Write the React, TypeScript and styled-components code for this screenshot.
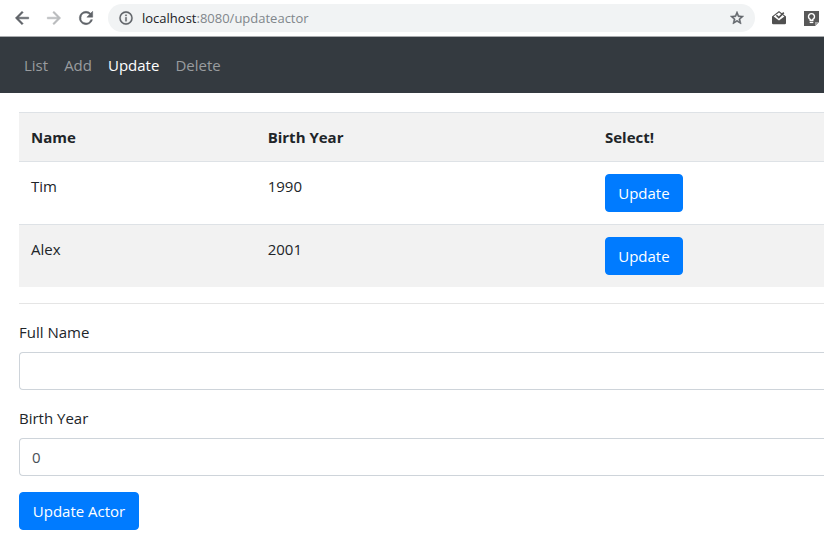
import React, { useState } from "react";
import styled, { createGlobalStyle } from "styled-components";

const GlobalStyle = createGlobalStyle`
  *, *::before, *::after { box-sizing: border-box; }
  body {
    margin: 0;
    background: #fff;
    color: #212529;
    font-family: "Open Sans", "Noto Sans", sans-serif;
    font-size: 15px;
    line-height: 24px;
    overflow-x: hidden;
  }
`;

const Toolbar = styled.header`
  display: flex;
  align-items: center;
  height: 37px;
  padding-left: 11px;
  border-bottom: 1px solid #a9abae;
  background: #fff;
`;

const IconButton = styled.button<{ $color?: string }>`
  display: flex;
  flex: none;
  align-items: center;
  justify-content: center;
  width: 22px;
  height: 22px;
  padding: 0;
  border: 0;
  background: none;
  color: ${(p) => p.$color ?? "#5f6368"};
`;

const NavButtons = styled.div`
  display: flex;
  gap: 10px;
  margin-right: 11px;
`;

const AddressBar = styled.div`
  display: flex;
  flex: 1;
  align-items: center;
  height: 28px;
  padding: 0 7px;
  border-radius: 14px;
  background: #f1f3f4;
  font-size: 13px;
  color: #80868b;
`;

const Address = styled.span`
  flex: 1;
  margin-left: 5px;
  line-height: 20px;
`;

const Host = styled.span`
  color: #202124;
`;

const Extensions = styled.div`
  display: flex;
  gap: 10px;
  margin-left: 13px;
  margin-right: 2px;
`;

const Navbar = styled.nav`
  display: flex;
  align-items: center;
  height: 56px;
  padding: 0 16px;
  background: #343a40;
`;

const NavLink = styled.a<{ $active?: boolean }>`
  padding: 8px;
  color: ${(p) => (p.$active ? "#fff" : "#999c9f")};
  text-decoration: none;
`;

const Main = styled.main`
  padding: 19px 0 30px 19px;
`;

const Table = styled.table`
  width: 100%;
  table-layout: fixed;
  border-collapse: collapse;
`;

const Col = styled.col<{ $width?: string }>`
  width: ${(p) => p.$width ?? "auto"};
`;

const Row = styled.tr`
  border-top: 1px solid #dee2e6;
  &:nth-child(odd) { background: #f2f2f2; }
`;

const HeadCell = styled.th`
  padding: 12px;
  text-align: left;
  font-weight: 700;
`;

const Cell = styled.td`
  padding: 12px;
  vertical-align: top;
`;

const Button = styled.button<{ $minWidth: number }>`
  display: block;
  min-width: ${(p) => p.$minWidth}px;
  height: 38px;
  padding: 6px 12px;
  border: 1px solid #007bff;
  border-radius: 4px;
  background: #007bff;
  color: #fff;
  font: inherit;
`;

const Divider = styled.hr`
  margin: 16px 0;
  border: 0;
  border-top: 1px solid #e5e5e5;
`;

const Field = styled.div`
  margin-bottom: 16px;
`;

const Label = styled.label`
  display: block;
  margin-bottom: 8px;
`;

const Input = styled.input`
  display: block;
  width: 100%;
  height: 38px;
  padding: 6px 12px;
  border: 1px solid #ced4da;
  border-right: 0;
  border-radius: 4px 0 0 4px;
  background: #fff;
  color: #495057;
  font: inherit;
`;

const Glyph = ({ d, size, weight = 0 }: { d: string; size: number; weight?: number }) => (
  <svg width={size} height={size} viewBox="0 0 24 24" fill="currentColor" aria-hidden="true">
    <path d={d} fillRule="evenodd" stroke="currentColor" strokeWidth={weight} />
  </svg>
);

const icons = {
  back: "M20 11H7.83l5.59-5.59L12 4l-8 8 8 8 1.41-1.41L7.83 13H20z",
  forward: "M4 11h12.17l-5.59-5.59L12 4l8 8-8 8-1.41-1.41L16.17 13H4z",
  reload:
    "M17.65 6.35A7.95 7.95 0 0 0 12 4a8 8 0 1 0 7.73 10h-2.08A6 6 0 1 1 12 6c1.66 0 3.14.69 4.22 1.78L13 11h7V4z",
  info: "M11 7h2v2h-2zm0 4h2v6h-2zm1-9a10 10 0 1 0 0 20 10 10 0 0 0 0-20zm0 18a8 8 0 1 1 0-16 8 8 0 0 1 0 16z",
  star: "M22 9.24l-7.19-.62L12 2 9.19 8.63 2 9.24l5.46 4.73L5.82 21 12 17.27 18.18 21l-1.63-7.03zM12 15.4l-3.76 2.27 1-4.28-3.32-2.88 4.38-.38L12 6.1l1.71 4.04 4.38.38-3.32 2.88 1 4.28z",
};

const InboxIcon = () => (
  <svg width="16" height="16" viewBox="0 0 16 16" aria-hidden="true">
    <path d="M1 6.4 8 1l7 5.4V13a1.2 1.2 0 0 1-1.2 1.2H2.2A1.2 1.2 0 0 1 1 13z" fill="#505050" />
    <path d="M2.6 6.6 8 2.6l5.4 4L8 10.4z" fill="#fff" />
    <path d="m5.4 5.2 2.4 2.4 5-5" fill="none" stroke="#505050" strokeWidth="1.6" />
  </svg>
);

const NoteIcon = () => (
  <svg width="16" height="16" viewBox="-1 -1 16 16" aria-hidden="true">
    <path d="M0 0h15v11l-4 4H0z" fill="#585858" />
    <path d="M11 15v-4h4z" fill="#a0a0a0" />
    <path d="M6.2 9.2V8.3a3 3 0 1 1 2.6 0v.9z" fill="none" stroke="#fff" strokeWidth="1.4" />
    <path d="M5.7 11.4h3.6" stroke="#fff" strokeWidth="1.4" />
  </svg>
);

const links = ["List", "Add", "Update", "Delete"];
const actors = [
  { name: "Tim", year: 1990 },
  { name: "Alex", year: 2001 },
];

export default function App() {
  const [name, setName] = useState("");
  const [year, setYear] = useState("0");

  return (
    <>
      <GlobalStyle />
      <Toolbar>
        <NavButtons>
          <IconButton aria-label="Back"><Glyph d={icons.back} size={20} weight={0.6} /></IconButton>
          <IconButton aria-label="Forward" $color="#b9bbbd"><Glyph d={icons.forward} size={20} weight={0.6} /></IconButton>
          <IconButton aria-label="Reload"><Glyph d={icons.reload} size={20} weight={0.6} /></IconButton>
        </NavButtons>
        <AddressBar>
          <IconButton aria-label="Site information"><Glyph d={icons.info} size={16} weight={0.4} /></IconButton>
          <Address><Host>localhost</Host>:8080/updateactor</Address>
          <IconButton aria-label="Bookmark"><Glyph d={icons.star} size={16} weight={0.8} /></IconButton>
        </AddressBar>
        <Extensions>
          <IconButton aria-label="Inbox"><InboxIcon /></IconButton>
          <IconButton aria-label="Notes"><NoteIcon /></IconButton>
        </Extensions>
      </Toolbar>
      <Navbar>
        {links.map((link) => (
          <NavLink key={link} href={`#${link.toLowerCase()}`} $active={link === "Update"}>
            {link}
          </NavLink>
        ))}
      </Navbar>
      <Main>
        <Table>
          <colgroup>
            <Col $width="29.4%" />
            <Col $width="41.9%" />
            <Col />
          </colgroup>
          <tbody>
            <Row>
              <HeadCell scope="col">Name</HeadCell>
              <HeadCell scope="col">Birth Year</HeadCell>
              <HeadCell scope="col">Select!</HeadCell>
            </Row>
            {actors.map((actor) => (
              <Row key={actor.name}>
                <Cell>{actor.name}</Cell>
                <Cell>{actor.year}</Cell>
                <Cell>
                  <Button
                    type="button"
                    $minWidth={78}
                    onClick={() => {
                      setName(actor.name);
                      setYear(String(actor.year));
                    }}
                  >
                    Update
                  </Button>
                </Cell>
              </Row>
            ))}
          </tbody>
        </Table>
        <Divider />
        <form onSubmit={(e) => e.preventDefault()}>
          <Field>
            <Label htmlFor="name">Full Name</Label>
            <Input id="name" value={name} onChange={(e) => setName(e.target.value)} />
          </Field>
          <Field>
            <Label htmlFor="year">Birth Year</Label>
            <Input id="year" value={year} onChange={(e) => setYear(e.target.value)} />
          </Field>
          <Button type="submit" $minWidth={120}>Update Actor</Button>
        </form>
      </Main>
    </>
  );
}
